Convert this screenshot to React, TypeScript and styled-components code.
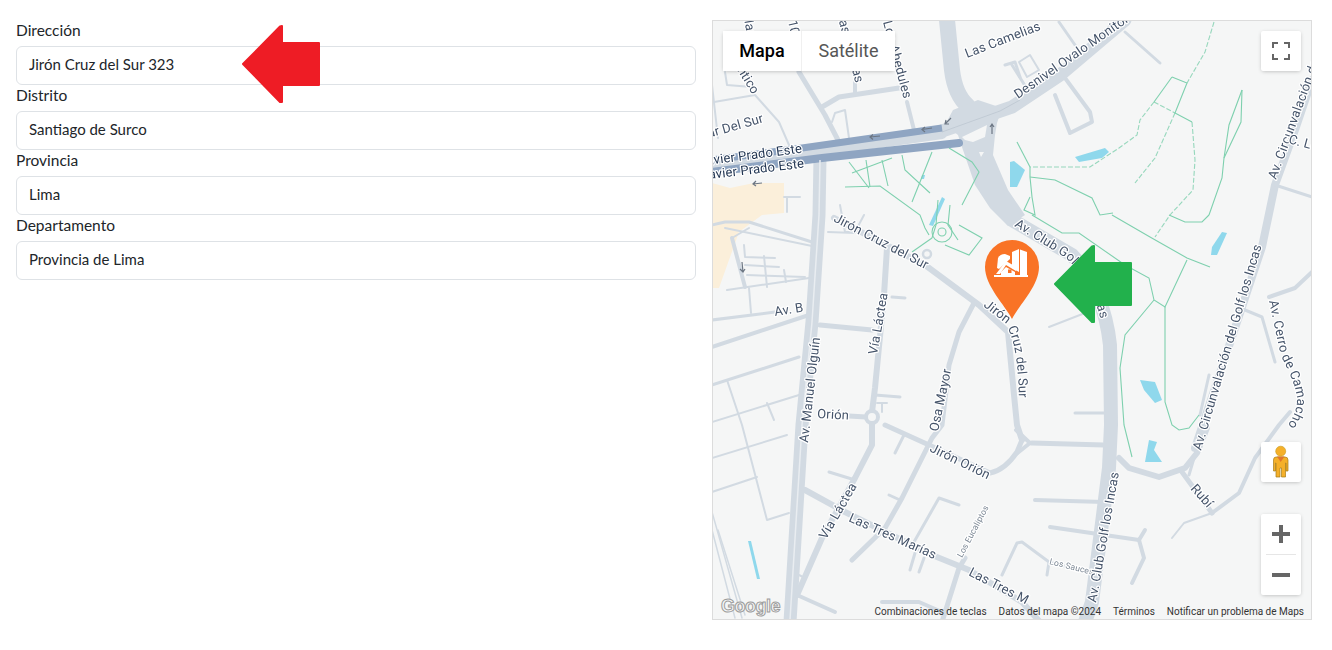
import React from 'react';
import styled, { createGlobalStyle } from 'styled-components';

const GlobalStyle = createGlobalStyle`
	html, body {
		margin: 0;
		padding: 0;
		background: #fff;
	}
`;

const Page = styled.div`
	position: relative;
	display: flex;
	gap: 16px;
	width: 1332px;
	height: 650px;
	padding: 20px 20px 0 16px;
	box-sizing: border-box;
	overflow: hidden;
	font-family: Lato, "Noto Sans", sans-serif;
	color: #212529;
`;

const FormColumn = styled.div`
	position: relative;
	width: 680px;
	flex: none;
`;

const Field = styled.div`
	display: flex;
	flex-direction: column;
`;

const Label = styled.label`
	height: 26px;
	line-height: 21px;
	font-size: 15.5px;
`;

const Input = styled.input`
	height: 39px;
	box-sizing: border-box;
	padding: 0 12px 3px;
	border: 1px solid #dee2e6;
	border-radius: 6px;
	background: #fff;
	font: inherit;
	font-size: 15px;
	color: #212529;
	outline: none;
`;

const Arrow = styled.svg<{ $left: number; $top: number }>`
	position: absolute;
	left: ${({ $left }) => $left}px;
	top: ${({ $top }) => $top}px;
	width: 80px;
	height: 80px;
	z-index: 2;
`;

const MapPanel = styled.div`
	position: relative;
	width: 600px;
	height: 600px;
	flex: none;
	box-sizing: border-box;
	border: 1px solid #dcdcdc;
	background: #f5f6f6;
	overflow: hidden;
	font-family: Roboto, sans-serif;
`;

const MapCanvas = styled.svg`
	display: block;
	width: 598px;
	height: 598px;
	filter: blur(0.35px);
`;

const ControlBox = styled.div<{ $top: number }>`
	position: absolute;
	top: ${({ $top }) => $top}px;
	right: 10px;
	width: 40px;
	background: #fff;
	border-radius: 2px;
	box-shadow: 0 1px 4px -1px rgba(0, 0, 0, 0.3);
	svg {
		display: block;
		width: 40px;
		height: 40px;
	}
`;

const ZoomDivider = styled.div`
	height: 1px;
	margin: 0 5px;
	background: #e6e6e6;
`;

const MapType = styled.div`
	position: absolute;
	top: 10px;
	left: 10px;
	display: flex;
	gap: 1px;
	height: 40px;
	border-radius: 2px;
	background: #f0f0f0;
	box-shadow: 0 1px 4px -1px rgba(0, 0, 0, 0.3);
`;

const MapTypeButton = styled.div<{ $active?: boolean; $width: number }>`
	width: ${({ $width }) => $width}px;
	display: flex;
	align-items: center;
	justify-content: center;
	padding-bottom: 2px;
	box-sizing: border-box;
	background: #fff;
	font-size: 18px;
	font-weight: ${({ $active }) => ($active ? 500 : 400)};
	color: ${({ $active }) => ($active ? '#000' : '#565656')};
`;

const Attribution = styled.div`
	position: absolute;
	right: 7px;
	bottom: 0;
	display: flex;
	gap: 12px;
	font-size: 10px;
	line-height: 14px;
	color: #333;
`;

const GoogleLogo = styled.span`
	position: absolute;
	left: 8px;
	bottom: 1px;
	font-family: "Liberation Sans", sans-serif;
	font-size: 18px;
	font-weight: 700;
	line-height: 24px;
	letter-spacing: -0.5px;
	color: #f6f6f6;
	-webkit-text-stroke: 1px #9c9c9c;
`;

const MapLabel = styled.text<{ $size?: number; $dark?: boolean }>`
	font-family: Roboto, sans-serif;
	font-size: ${({ $size }) => $size ?? 13}px;
	letter-spacing: 0.15px;
	fill: ${({ $dark, $size }) => ($dark ? '#1f3350' : $size ? '#7b8794' : '#45546a')};
	stroke: #fff;
	stroke-width: 2.5px;
	stroke-linejoin: round;
	paint-order: stroke fill;
`;

const fields = [
	{ label: 'Dirección', value: 'Jirón Cruz del Sur 323' },
	{ label: 'Distrito', value: 'Santiago de Surco' },
	{ label: 'Provincia', value: 'Lima' },
	{ label: 'Departamento', value: 'Provincia de Lima' },
];

// [stroke width, path] in page coordinates, the svg viewBox starts at the map corner
const roads: [number, string][] = [
	[16, 'M947 20 L952 70 Q955 95 968 106'],
	[13, 'M942 131 L1012 107 L1060 75 L1125 20'],
	[14, 'M1012 220 L1072 255 Q1104 290 1110 345 L1111 425 L1109 468 L1092 602 L1085 622'],
	[10, 'M712 166 L802 154 L942 134'],
	[13, 'M820 158 L819 215 L812 322 L802 425 L790 622'],
	[6, 'M834 218 L925 265 L979 305 L1008 332 L1014 395 L1017 425 L1022 440'],
	[6, 'M887 248 L884 295 L875 388 L872 412'],
	[6, 'M872 422 L872 445 L855 478 L822 538 L797 595'],
	[5, 'M885 425 L929 445 L990 473 Q1005 470 1017 452 L1022 440'],
	[5, 'M1032 443 L1104 445'],
	[4, 'M1016 430 L1030 443 L1015 455'],
	[5, 'M849 416 L866 417'],
	[5, 'M974 303 L959 332 L949 365 L942 425 L932 438 L902 498 L885 528 L852 560'],
	[6, 'M805 490 L845 512 L932 555 L969 570 L1022 602 L1040 622'],
	[5, 'M799 72 L825 115 L839 142'],
	[5, 'M822 107 L839 97 L899 88'],
	[4, 'M855 82 L855 93'],
	[4, 'M907 102 L914 130'],
	[2, 'M832 122 L835 113 L845 110 L849 138'],
	[2, 'M714 102 L755 95 L779 122 L789 145'],
	[2, 'M725 72 L727 85 L752 87'],
	[2, 'M712 85 L718 138'],
	[4, 'M1065 78 L1090 112 L1092 122 L1070 133 L1055 95'],
	[3, 'M1059 22 L1075 45'],
	[3, 'M1125 32 L1160 63'],
	[2, 'M1019 62 L1030 55 L1039 70 L1027 77 Z'],
	[3, 'M1005 65 L1015 62 L1020 77'],
	[3, 'M1012 65 L1029 92'],
	[8, 'M1195 448 L1262 247 L1275 185 L1295 130 L1312 80'],
	[3, 'M1275 185 L1312 197'],
	[6, 'M1119 458 L1129 468 L1159 477 L1185 468 L1197 453 L1207 428'],
	[5, 'M1182 472 L1212 513'],
	[3, 'M1189 475 L1194 458'],
	[4, 'M1212 513 L1239 493 L1255 458 L1279 425 L1290 412'],
	[2, 'M1212 513 L1184 523 L1172 538'],
	[4, 'M1269 297 L1295 288 L1312 272'],
	[3, 'M1245 310 L1262 317 L1275 362'],
	[3, 'M1209 375 L1200 415'],
	[3, 'M1075 413 L1105 413'],
	[2, 'M1049 327 L1085 313'],
	[4, 'M1035 500 L1104 502'],
	[4, 'M1050 527 L1139 540 L1145 530'],
	[4, 'M1139 540 L1144 558 L1132 583'],
	[3, 'M1002 575 L1017 543 L1022 542 L1049 562 L1100 575'],
	[3, 'M1047 575 L1049 562'],
	[3, 'M712 225 L725 222 L749 222 L812 242'],
	[2, 'M725 228 L812 246'],
	[4, 'M732 238 L745 287'],
	[2, 'M732 238 L749 228'],
	[2, 'M744 245 L745 257 L775 258'],
	[2, 'M745 265 L779 267'],
	[2, 'M747 275 L805 277'],
	[2, 'M727 290 L809 278'],
	[2, 'M764 256 L767 287'],
	[2, 'M784 270 L786 282'],
	[2, 'M749 288 L751 313'],
	[3, 'M712 320 L775 312'],
	[4, 'M712 347 L809 315'],
	[3, 'M712 385 L799 357'],
	[2, 'M727 380 L742 425 L767 520 L789 513'],
	[2, 'M712 422 L799 395'],
	[2, 'M767 403 L774 420'],
	[2, 'M712 458 L787 435'],
	[2, 'M712 492 L757 477'],
	[1.5, 'M712 512 L742 618'],
	[1.5, 'M712 530 L735 618'],
	[1.5, 'M718 530 L745 615'],
	[5, 'M820 325 L872 330'],
	[3, 'M892 297 L905 298'],
	[3, 'M875 395 L900 397'],
	[2, 'M877 403 L887 403 M882 403 L882 412'],
	[3, 'M829 472 L855 480'],
	[3, 'M904 435 L895 453'],
	[3, 'M889 495 L900 500'],
	[3, 'M914 542 L939 498 L959 505'],
	[3, 'M910 570 L915 553'],
	[3, 'M919 572 L924 558'],
	[5, 'M942 622 L959 568 L965 558'],
	[4, 'M797 595 L835 612'],
	[2, 'M799 575 L805 578'],
	[4, 'M882 602 L919 602 L942 612'],
	[2, 'M784 197 L800 197 M787 197 L787 212'],
	[2, 'M840 205 L845 232 L855 232 L864 215'],
	[2, 'M828 232 L855 233'],
];

const greenPaths = [
	'M849 162 L869 188',
	'M852 173 L892 158',
	'M866 160 L870 187',
	'M882 160 L888 186',
	'M845 187 L880 186 L920 215 L925 228 L929 235',
	'M902 155 L905 170 L930 193',
	'M932 152 L912 202',
	'M949 148 L972 162 L979 172 L962 205',
	'M959 225 L982 238 L969 255 L945 245',
	'M912 252 L932 238',
	'M938 200 L936 225 L932 238 M950 205 L948 225 L958 240',
	'M1172 77 L1187 83 L1175 113 L1192 122',
	'M1172 77 L1154 102',
	'M1030 167 L1017 142',
	'M1030 167 L1030 177 L1032 197 L1035 215 L1024 210 L1030 197',
	'M1030 177 L1055 180 L1092 198 L1100 215 L1113 213',
	'M1242 90 L1229 125 L1224 158 L1222 178 L1209 215',
	'M1242 90 L1241 122 L1224 158',
	'M1032 215 L1062 233 L1079 233 L1125 265 L1149 278 L1154 300 L1165 307 L1187 260',
	'M1112 215 L1150 237 L1187 258 L1210 267',
	'M1169 215 L1185 222 L1202 222 L1209 215',
	'M1154 300 L1125 335 L1120 368 L1124 425 L1132 457',
	'M1165 307 L1165 402 L1172 425 L1179 430 L1189 428 L1199 415',
];

const dashedGreen = [
	'M1192 122 L1195 160 L1193 190 L1170 215 L1155 237',
	'M1154 102 L1175 113',
	'M1154 102 L1140 120 L1137 135 L1119 148 L1090 167 L1030 167',
	'M1175 113 L1155 158 L1135 183',
	'M1214 22 L1205 52 L1187 83',
];

const water = [
	'M1075 157 L1105 148 L1109 152 L1102 158 L1079 162 Z',
	'M1010 162 L1014 161 L1025 170 L1017 187 L1010 187 Z',
	'M1222 232 L1227 233 L1217 255 L1211 255 L1212 247 Z',
	'M1140 380 L1155 382 L1162 400 L1155 403 L1144 390 Z',
	'M1149 440 L1157 442 L1154 450 L1162 462 L1145 462 Z',
	'M942 197 L945 199 L933 226 L929 225 Z',
	'M922 175 L925 175 L924 179 L921 179 Z',
	'M748 541 L751 541 L760 579 L757 579 Z',
];

const labels: { text: string; x: number; y: number; rotate: number; size?: number; dark?: boolean }[] = [
	{ text: 'Las Camelias', x: 967, y: 58, rotate: -21 },
	{ text: 'Desnivel Ovalo Monitor', x: 1018, y: 99, rotate: -35 },
	{ text: 'Av. Circunvalación de', x: 1276, y: 180, rotate: -70 },
	{ text: 'C. Lo', x: 1288, y: 143, rotate: 15 },
	{ text: 'Los Ahedules', x: 883, y: 22, rotate: 75 },
	{ text: 'Las Acacias', x: 837, y: 14, rotate: 75 },
	{ text: 'Mar', x: 743, y: 13, rotate: 80 },
	{ text: '10.', x: 788, y: 21, rotate: 78 },
	{ text: 'Mar Del Sur', x: 698, y: 141, rotate: -16 },
	{ text: 'Javier Prado Este', x: 700, y: 166, rotate: -7.5, dark: true },
	{ text: 'Javier Prado Este', x: 702, y: 180, rotate: -7, dark: true },
	{ text: 'Jirón Cruz del Sur', x: 833, y: 221, rotate: 27.5 },
	{ text: 'Av. B', x: 775, y: 316, rotate: -9 },
	{ text: 'Av. Manuel Olguín', x: 808, y: 443, rotate: -83.5 },
	{ text: 'Vía Láctea', x: 877, y: 355, rotate: -80 },
	{ text: 'Osa Mayor', x: 938, y: 432, rotate: -78 },
	{ text: 'Orión', x: 817, y: 418, rotate: 3 },
	{ text: 'Jirón Orión', x: 929, y: 451, rotate: 26 },
	{ text: 'Vía Láctea', x: 826, y: 540, rotate: -60 },
	{ text: 'Las Tres Marías', x: 848, y: 521, rotate: 24 },
	{ text: 'Las Tres M', x: 968, y: 575, rotate: 27 },
	{ text: 'Los Eucaliptos', x: 962, y: 558, rotate: -62, size: 8.5 },
	{ text: 'Los Sauces', x: 1049, y: 564, rotate: 14, size: 8.5 },
	{ text: 'Av. Club Golf los Incas', x: 1096, y: 603, rotate: -80 },
	{ text: 'Rubí', x: 1190, y: 489, rotate: 48 },
	{ text: 'Av. Circunvalación del Golf los Incas', x: 1201, y: 451, rotate: -73.5 },
	{ text: 'Atlántico', x: 724.5, y: 50, rotate: 58 },
];

const curvedLabels = [
	{ id: 'cruz-del-sur', text: 'Jirón Cruz del Sur', d: 'M983 306 L1004 322 Q1018 340 1019 400' },
	{ id: 'club-golf', text: 'Av. Club Golf los Incas', d: 'M1014 226 L1066 258 Q1090 280 1101 320' },
	{ id: 'cerro-camacho', text: 'Av. Cerro de Camacho', d: 'M1269 301 L1281 356 Q1298 388 1297 402 Q1296 416 1284 430' },
];

// one way arrows painted on the roads
const roadArrows = [
	'M870 137 L880 136 M873 134.5 L870 137 L873 139.5',
	'M922 129.5 L932 128 M925 127 L922 129.5 L925 132',
	'M945 124 L951 118 M946 120 L945 124 L949 124',
	'M992 134 L992 124 M990 127 L992 124 L994 127',
	'M742 262 L743 272 M740 269 L743 272 L745 269',
	'M753 184 L762 183 M756 181 L753 184 L756 186',
];

const ArrowPath = 'M2 41 L39 3.5 L41 3 V20 H78 V62 H41 V79 L39 79 Z';

const App = (): JSX.Element => {
	return (
		<>
			<GlobalStyle />
			<Page>
				<FormColumn>
					{fields.map(({ label, value }) => (
						<Field key={label}>
							<Label>{label}</Label>
							<Input value={value} readOnly />
						</Field>
					))}
					<Arrow $left={225} $top={3} viewBox="0 0 80 80">
						<path d={ArrowPath} fill="#ee1c25" stroke="#ee1c25" strokeWidth="2" strokeLinejoin="round" />
					</Arrow>
				</FormColumn>
				<MapPanel>
					<MapCanvas viewBox="713 21 598 598">
						<path
							d="M712 183 L730 188 L754 183 L784 183 L784 213 L762 215 L739 232 L719 288 L712 288 Z"
							fill="#fbefda"
						/>
						<g fill="none" stroke="#d2dae2" strokeLinecap="round" strokeLinejoin="round">
							{roads.map(([width, d]) => (
								<path key={d} d={d} strokeWidth={width} />
							))}
						</g>
						{/* junction of the three big roads */}
						<path
							d="M953 110 L978 100 L1002 108 L997 123 L995 135 L993 155 L1008 190 L1025 215 L1008 226 L990 208 L975 185 L963 150 L958 135 L945 125 Z"
							fill="#d2dae2"
						/>
						<path d="M962 137 L987 125 L985 137 L973 142 L965 140 Z" fill="#f5f6f6" />
						<path d="M979 152 L984 152 L981 157 Z" fill="#f5f6f6" />
						<path d="M942 132 L1000 111 L1020 100" fill="none" stroke="#bcc6d0" strokeWidth="0.8" />
						<path d="M712 172 L822 158 L959 143" fill="none" stroke="#8fa5c2" strokeWidth="8" strokeLinecap="round" />
						<path d="M712 160 L802 148 L942 128" fill="none" stroke="#8fa5c2" strokeWidth="7" />
						<path d="M820 160 L819 215 L812 322 L802 425 L790 620" fill="none" stroke="#e9edf1" strokeWidth="1.5" />
						<circle cx="872" cy="417" r="6" fill="#f5f6f6" stroke="#d2dae2" strokeWidth="4" />
						<circle cx="927" cy="254" r="4" fill="#f5f6f6" stroke="#d2dae2" strokeWidth="2.5" />
						<g fill="#8fd8ec">
							{water.map((d) => (
								<path key={d} d={d} />
							))}
						</g>
						<g fill="none" stroke="#7ed0ae" strokeWidth="1.1">
							{greenPaths.map((d) => (
								<path key={d} d={d} />
							))}
							{dashedGreen.map((d) => (
								<path key={d} d={d} strokeDasharray="5 2" opacity="0.8" />
							))}
							<circle cx="942" cy="232" r="4" />
							<circle cx="942" cy="232" r="10" />
						</g>
						<g fill="none" stroke="#6c7683" strokeWidth="1.2">
							{roadArrows.map((d) => (
								<path key={d} d={d} />
							))}
						</g>
						{labels.map(({ text, x, y, rotate, size, dark }) => (
							<MapLabel
								key={`${text}-${x}`}
								x={x}
								y={y}
								transform={`rotate(${rotate} ${x} ${y})`}
								$size={size}
								$dark={dark}
							>
								{text}
							</MapLabel>
						))}
						<defs>
							{curvedLabels.map(({ id, d }) => (
								<path key={id} id={id} d={d} />
							))}
						</defs>
						{curvedLabels.map(({ id, text }) => (
							<MapLabel key={id}>
								<textPath href={`#${id}`}>{text}</textPath>
							</MapLabel>
						))}
						{/* marker */}
						<path
							d="M1012 319 C1005 305 985 286 985 267 A27 27 0 1 1 1039 267 C1039 286 1019 305 1012 319 Z"
							fill="#f97326"
						/>
						<g fill="#fff">
							<path d="M994 275 H1028 V277 H994 Z" />
							<path d="M1012 252 L1019 249 V264 L1019 272 L1012 268 Z" />
							<path d="M1020 249.5 L1027 252 V275 H1020 Z" />
							<path d="M997 268 L998 258 Q1000 254 1005 254 L1010 256 V259 L999 269 Z" />
							<path d="M996 274 L1006 261 L1018 268 L1016 271 L1006 265 L1000 274 Z" />
							<path d="M1001 275 V272 L1006 267 L1015 272 V275 Z" />
						</g>
						<path d="M1008 269.5 H1011.5 V273 H1008 Z" fill="#f97326" />
					</MapCanvas>
					<MapType>
						<MapTypeButton $active $width={78}>Mapa</MapTypeButton>
						<MapTypeButton $width={93}>Satélite</MapTypeButton>
					</MapType>
					<ControlBox $top={10}>
						<svg viewBox="0 0 40 40">
							<path
								d="M12 17 V12 H17 M23 12 H28 V17 M28 23 V28 H23 M17 28 H12 V23"
								fill="none"
								stroke="#666"
								strokeWidth="2"
							/>
						</svg>
					</ControlBox>
					<ControlBox $top={421}>
						<svg viewBox="0 0 40 40">
							<path
								d="M15 15 H24 Q27 15 27 18 V29 H25 V21 H24.5 V35 H20.5 V26 H19 V35 H15 V21 H14.5 V29 H12.5 V18 Q12.5 15 15 15 Z"
								fill="#f5b02a"
								stroke="#a57c18"
								strokeWidth="0.7"
							/>
							<path d="M16 14.5 L19.7 20 L23.5 14.5 Z" fill="#e2762a" />
							<circle cx="19.7" cy="9.2" r="5" fill="#f5b02a" stroke="#c79a1e" strokeWidth="0.6" />
						</svg>
					</ControlBox>
					<ControlBox $top={493}>
						<svg viewBox="0 0 40 40">
							<path d="M11 18 H18 V11 H22 V18 H29 V22 H22 V29 H18 V22 H11 Z" fill="#666" />
						</svg>
						<ZoomDivider />
						<svg viewBox="0 0 40 40">
							<path d="M11 18 H29 V22 H11 Z" fill="#666" />
						</svg>
					</ControlBox>
					<GoogleLogo>Google</GoogleLogo>
					<Attribution>
						<span>Combinaciones de teclas</span>
						<span>Datos del mapa ©2024</span>
						<span>Términos</span>
						<span>Notificar un problema de Maps</span>
					</Attribution>
					<Arrow $left={340} $top={222} viewBox="0 0 80 80">
						<path d={ArrowPath} fill="#22b14c" stroke="#22b14c" strokeWidth="2" strokeLinejoin="round" />
					</Arrow>
				</MapPanel>
			</Page>
		</>
	);
};

export default App;
